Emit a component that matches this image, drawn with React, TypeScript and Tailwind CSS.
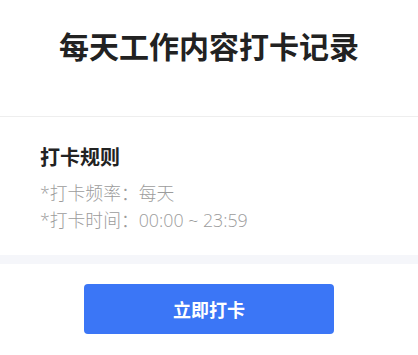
import React from 'react';

const font = { fontFamily: '"Noto Sans CJK SC", "Noto Sans", sans-serif' };
const ruleFont = { fontFamily: '"Open Sans", "Noto Sans CJK SC", sans-serif' };

export default function App() {
    return (
        <div className="w-[418px] min-h-[355px] bg-white" style={font}>
            <div className="h-[117px] border-b border-[#eeeeee] flex justify-center pt-[22px]">
                <h1 className="text-[30px] leading-[46px] font-bold text-[#222222]">每天工作内容打卡记录</h1>
            </div>

            <div className="px-[40px] pt-[26px] pb-[22px]">
                <h2 className="text-[20px] leading-[28px] font-bold text-[#222222]">打卡规则</h2>
                <div className="mt-[9px] text-[17.8px] leading-[26.5px] font-light text-[#9c9c9c]" style={ruleFont}>
                    <p>*打卡频率：每天</p>
                    <p>*打卡时间：00:00 ~ 23:59</p>
                </div>
            </div>

            <div className="h-[9px] bg-[#f5f6fa]" />

            <div className="flex justify-center pt-[20px] pb-[21px]">
                <button className="w-[250px] h-[50px] rounded-[4px] bg-[#3b76f6] text-white text-[18px] font-bold">
                    立即打卡
                </button>
            </div>
        </div>
    );
}
